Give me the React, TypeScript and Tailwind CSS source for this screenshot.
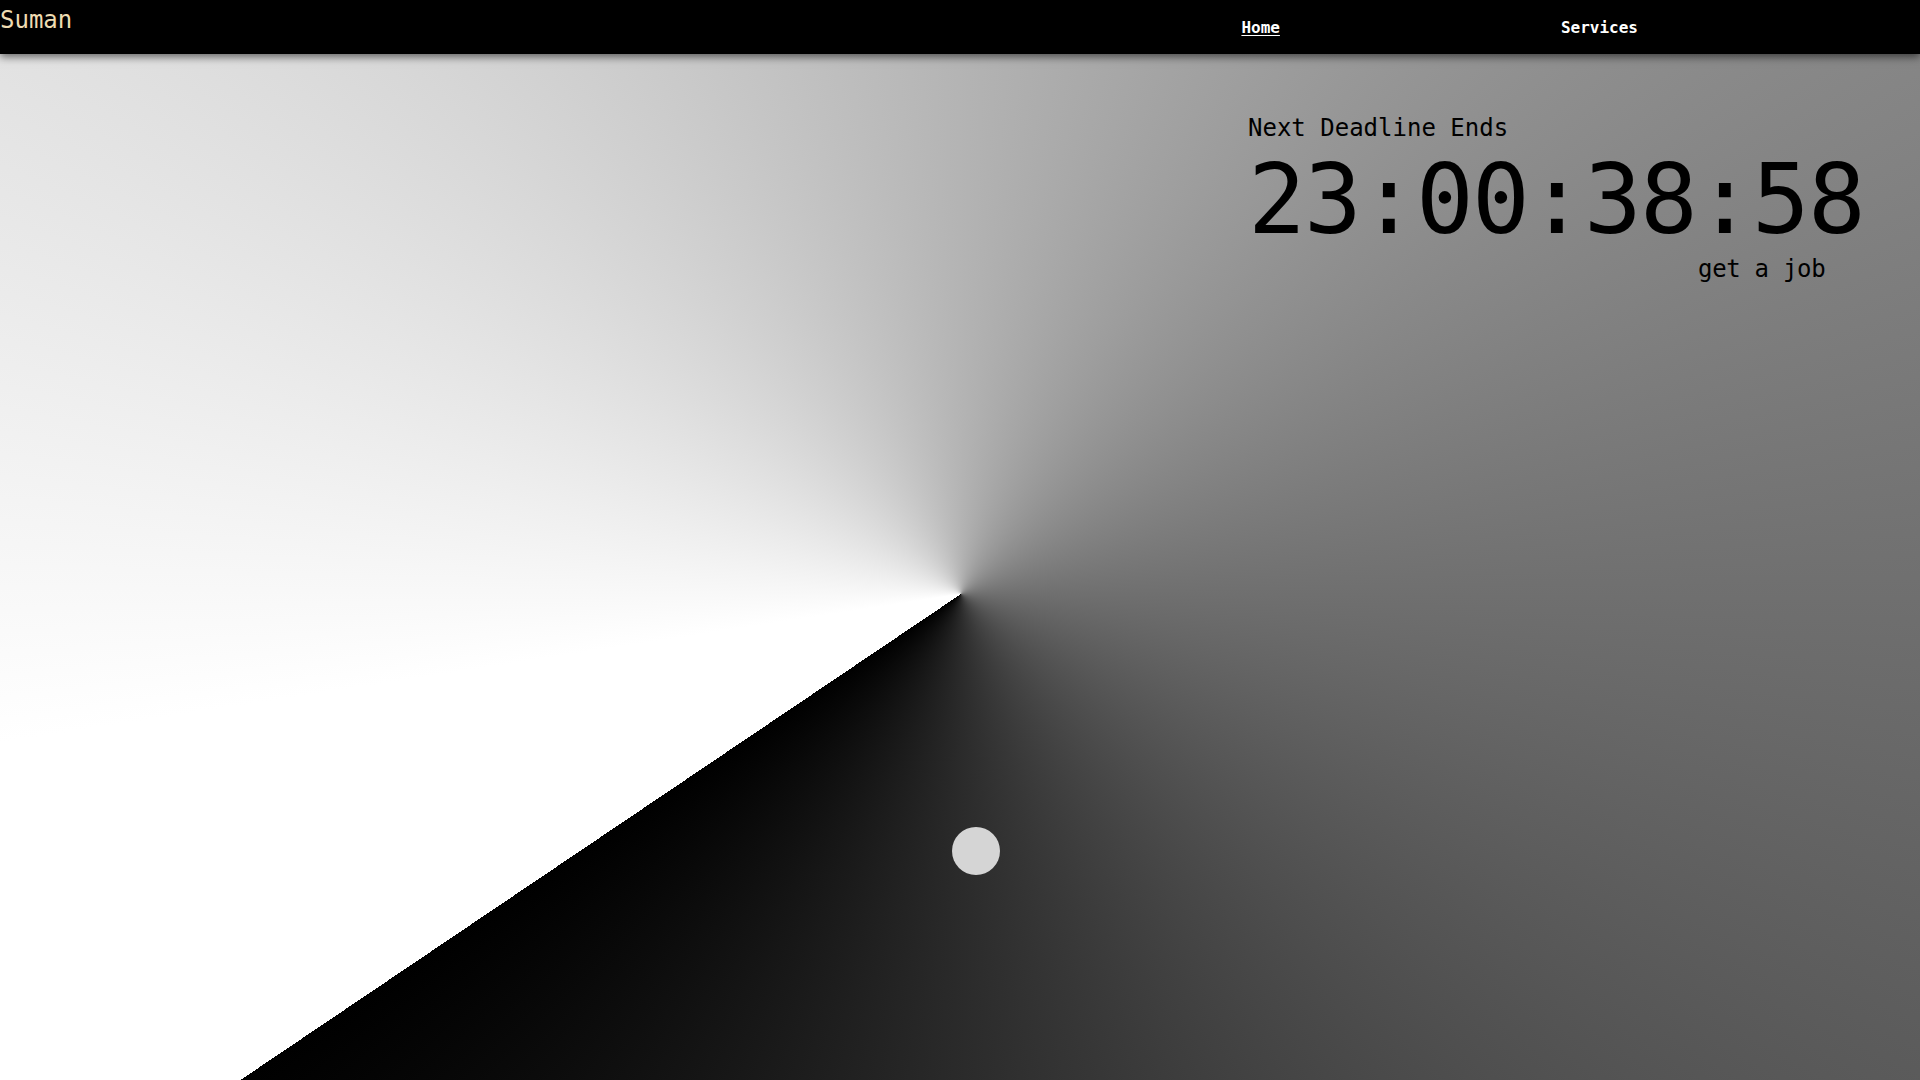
import React from "react";

const mono = { fontFamily: '"DejaVu Sans Mono", "Liberation Mono", monospace' };

function Header() {
  return (
    <header className="relative z-10 flex h-[54px] bg-black shadow-[0_3px_8px_rgba(0,0,0,0.55)]" style={mono}>
      <a href="#" className="pt-[5px] text-[24px] leading-tight text-[#efdcb2]">
        Suman
      </a>
      <nav className="ml-auto flex items-center gap-[281px] pr-[282px] pt-[2px] text-[16px] font-bold text-white">
        <a href="#" className="underline underline-offset-2">
          Home
        </a>
        <a href="#">Services</a>
      </nav>
    </header>
  );
}

function Countdown() {
  return (
    <section className="flex flex-col pl-[1248px] pt-[62px] text-black" style={mono}>
      <p className="text-[24px] leading-none">Next Deadline Ends</p>
      <p className="mt-[20px] text-[96px] leading-[80px] tracking-[-1.8px]">23:00:38:58</p>
      <p className="mt-[17px] pl-[450px] text-[24px] leading-none tracking-[-0.3px]">get a job</p>
    </section>
  );
}

export default function App() {
  return (
    <div className="relative h-screen w-full overflow-hidden bg-[conic-gradient(from_236deg_at_961px_594px,#ffffff,#ffffff_7%,#000000)]">
      <Header />
      <Countdown />
      {/* cursor follower */}
      <div className="absolute left-[952px] top-[827px] h-12 w-12 rounded-full bg-[#d5d5d5]" />
    </div>
  );
}
